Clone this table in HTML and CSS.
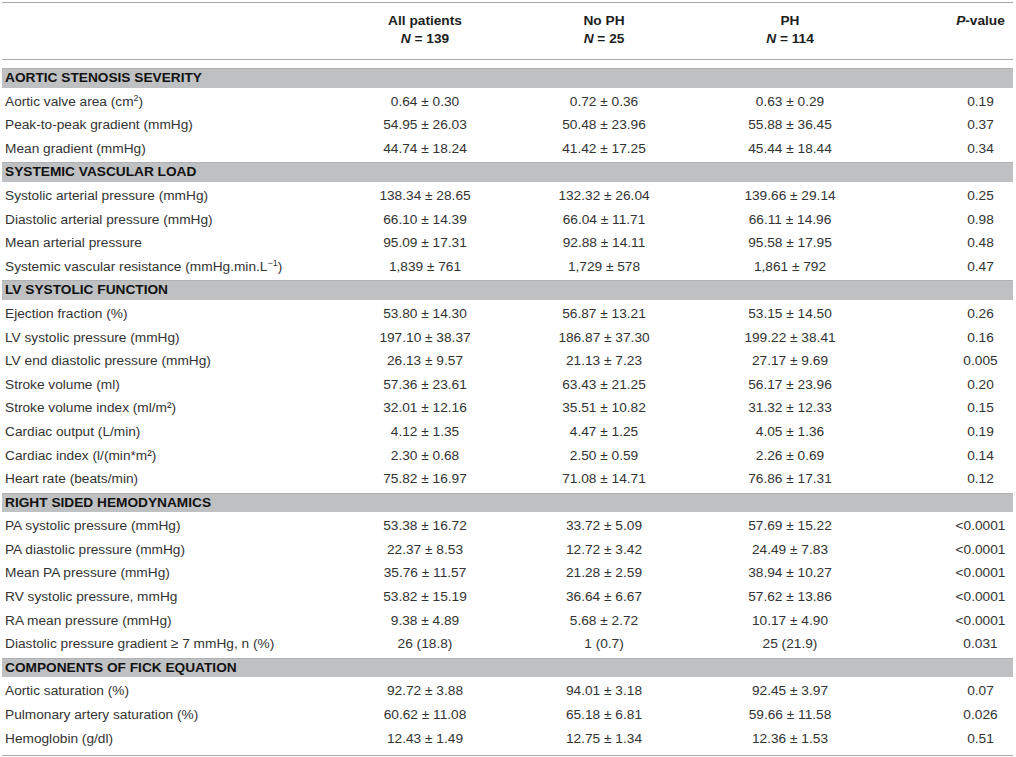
FILE: index.html
```html
<!DOCTYPE html>
<html>
<head>
<meta charset="utf-8">
<link rel="stylesheet" href="styles.css">
</head>
<body>
<div class="tbl">
  <div class="row head">
    <div class="c lab"></div>
    <div class="c">All patients<br><i>N</i> = 139</div>
    <div class="c">No PH<br><i>N</i> = 25</div>
    <div class="c">PH<br><i>N</i> = 114</div>
    <div class="c pv"><i>P</i>-value</div>
  </div>
  <div class="body">
    <div class="sec">AORTIC STENOSIS SEVERITY</div>
    <div class="row"><div class="c lab">Aortic valve area (cm<sup>2</sup>)</div><div class="c">0.64 ± 0.30</div><div class="c">0.72 ± 0.36</div><div class="c">0.63 ± 0.29</div><div class="c pv">0.19</div></div>
    <div class="row"><div class="c lab">Peak-to-peak gradient (mmHg)</div><div class="c">54.95 ± 26.03</div><div class="c">50.48 ± 23.96</div><div class="c">55.88 ± 36.45</div><div class="c pv">0.37</div></div>
    <div class="row"><div class="c lab">Mean gradient (mmHg)</div><div class="c">44.74 ± 18.24</div><div class="c">41.42 ± 17.25</div><div class="c">45.44 ± 18.44</div><div class="c pv">0.34</div></div>

    <div class="sec">SYSTEMIC VASCULAR LOAD</div>
    <div class="row"><div class="c lab">Systolic arterial pressure (mmHg)</div><div class="c">138.34 ± 28.65</div><div class="c">132.32 ± 26.04</div><div class="c">139.66 ± 29.14</div><div class="c pv">0.25</div></div>
    <div class="row"><div class="c lab">Diastolic arterial pressure (mmHg)</div><div class="c">66.10 ± 14.39</div><div class="c">66.04 ± 11.71</div><div class="c">66.11 ± 14.96</div><div class="c pv">0.98</div></div>
    <div class="row"><div class="c lab">Mean arterial pressure</div><div class="c">95.09 ± 17.31</div><div class="c">92.88 ± 14.11</div><div class="c">95.58 ± 17.95</div><div class="c pv">0.48</div></div>
    <div class="row"><div class="c lab">Systemic vascular resistance (mmHg.min.L<sup>−1</sup>)</div><div class="c">1,839 ± 761</div><div class="c">1,729 ± 578</div><div class="c">1,861 ± 792</div><div class="c pv">0.47</div></div>

    <div class="sec">LV SYSTOLIC FUNCTION</div>
    <div class="row"><div class="c lab">Ejection fraction (%)</div><div class="c">53.80 ± 14.30</div><div class="c">56.87 ± 13.21</div><div class="c">53.15 ± 14.50</div><div class="c pv">0.26</div></div>
    <div class="row"><div class="c lab">LV systolic pressure (mmHg)</div><div class="c">197.10 ± 38.37</div><div class="c">186.87 ± 37.30</div><div class="c">199.22 ± 38.41</div><div class="c pv">0.16</div></div>
    <div class="row"><div class="c lab">LV end diastolic pressure (mmHg)</div><div class="c">26.13 ± 9.57</div><div class="c">21.13 ± 7.23</div><div class="c">27.17 ± 9.69</div><div class="c pv">0.005</div></div>
    <div class="row"><div class="c lab">Stroke volume (ml)</div><div class="c">57.36 ± 23.61</div><div class="c">63.43 ± 21.25</div><div class="c">56.17 ± 23.96</div><div class="c pv">0.20</div></div>
    <div class="row"><div class="c lab">Stroke volume index (ml/m²)</div><div class="c">32.01 ± 12.16</div><div class="c">35.51 ± 10.82</div><div class="c">31.32 ± 12.33</div><div class="c pv">0.15</div></div>
    <div class="row"><div class="c lab">Cardiac output (L/min)</div><div class="c">4.12 ± 1.35</div><div class="c">4.47 ± 1.25</div><div class="c">4.05 ± 1.36</div><div class="c pv">0.19</div></div>
    <div class="row"><div class="c lab">Cardiac index (l/(min*m²)</div><div class="c">2.30 ± 0.68</div><div class="c">2.50 ± 0.59</div><div class="c">2.26 ± 0.69</div><div class="c pv">0.14</div></div>
    <div class="row"><div class="c lab">Heart rate (beats/min)</div><div class="c">75.82 ± 16.97</div><div class="c">71.08 ± 14.71</div><div class="c">76.86 ± 17.31</div><div class="c pv">0.12</div></div>

    <div class="sec">RIGHT SIDED HEMODYNAMICS</div>
    <div class="row"><div class="c lab">PA systolic pressure (mmHg)</div><div class="c">53.38 ± 16.72</div><div class="c">33.72 ± 5.09</div><div class="c">57.69 ± 15.22</div><div class="c pv">&lt;0.0001</div></div>
    <div class="row"><div class="c lab">PA diastolic pressure (mmHg)</div><div class="c">22.37 ± 8.53</div><div class="c">12.72 ± 3.42</div><div class="c">24.49 ± 7.83</div><div class="c pv">&lt;0.0001</div></div>
    <div class="row"><div class="c lab">Mean PA pressure (mmHg)</div><div class="c">35.76 ± 11.57</div><div class="c">21.28 ± 2.59</div><div class="c">38.94 ± 10.27</div><div class="c pv">&lt;0.0001</div></div>
    <div class="row"><div class="c lab">RV systolic pressure, mmHg</div><div class="c">53.82 ± 15.19</div><div class="c">36.64 ± 6.67</div><div class="c">57.62 ± 13.86</div><div class="c pv">&lt;0.0001</div></div>
    <div class="row"><div class="c lab">RA mean pressure (mmHg)</div><div class="c">9.38 ± 4.89</div><div class="c">5.68 ± 2.72</div><div class="c">10.17 ± 4.90</div><div class="c pv">&lt;0.0001</div></div>
    <div class="row"><div class="c lab">Diastolic pressure gradient <span class="ge">≥</span> 7 mmHg, n (%)</div><div class="c">26 (18.8)</div><div class="c">1 (0.7)</div><div class="c">25 (21.9)</div><div class="c pv">0.031</div></div>

    <div class="sec">COMPONENTS OF FICK EQUATION</div>
    <div class="row"><div class="c lab">Aortic saturation (%)</div><div class="c">92.72 ± 3.88</div><div class="c">94.01 ± 3.18</div><div class="c">92.45 ± 3.97</div><div class="c pv">0.07</div></div>
    <div class="row"><div class="c lab">Pulmonary artery saturation (%)</div><div class="c">60.62 ± 11.08</div><div class="c">65.18 ± 6.81</div><div class="c">59.66 ± 11.58</div><div class="c pv">0.026</div></div>
    <div class="row"><div class="c lab">Hemoglobin (g/dl)</div><div class="c">12.43 ± 1.49</div><div class="c">12.75 ± 1.34</div><div class="c">12.36 ± 1.53</div><div class="c pv">0.51</div></div>
  </div>
</div>
</body>
</html>
```
FILE: styles.css
```css
html, body {
  margin: 0;
  padding: 0;
  background: #ffffff;
}
body {
  font-family: "Liberation Sans", Arial, sans-serif;
  font-size: 13.7px;
  color: #333333;
}
.tbl {
  width: 1011px;
  margin: 2px 0 0 2px;
  display: flex;
  flex-direction: column;
}
.row {
  display: grid;
  grid-template-columns: 330px 186px 172px 200px 123px;
  height: 23.6px;
  line-height: 23.6px;
}
.c {
  text-align: center;
  white-space: nowrap;
}
.c.lab {
  text-align: left;
  padding-left: 3px;
}
.c.pv {
  padding-left: 58px;
}
.row.head {
  height: auto;
  line-height: 18px;
  border-top: 1px solid #a9a9a9;
  border-bottom: 1px solid #a9a9a9;
  padding: 9px 0 11px;
  font-weight: bold;
  color: #1e1e1e;
}
.row.head .pv {
  align-self: start;
}
.body {
  padding-top: 6px;
  padding-bottom: 5px;
  border-bottom: 1px solid #a9a9a9;
  display: flex;
  flex-direction: column;
}
.sec {
  height: 18.6px;
  line-height: 18.6px;
  margin: 2px 0;
  background: #bfc0c2;
  border-top: 1px solid #b0b1b3;
  font-weight: bold;
  color: #111111;
  padding-left: 3px;
}
sup {
  font-size: 9px;
  line-height: 0;
  vertical-align: 5px;
}
.ge {
  text-decoration: none;
}
```
